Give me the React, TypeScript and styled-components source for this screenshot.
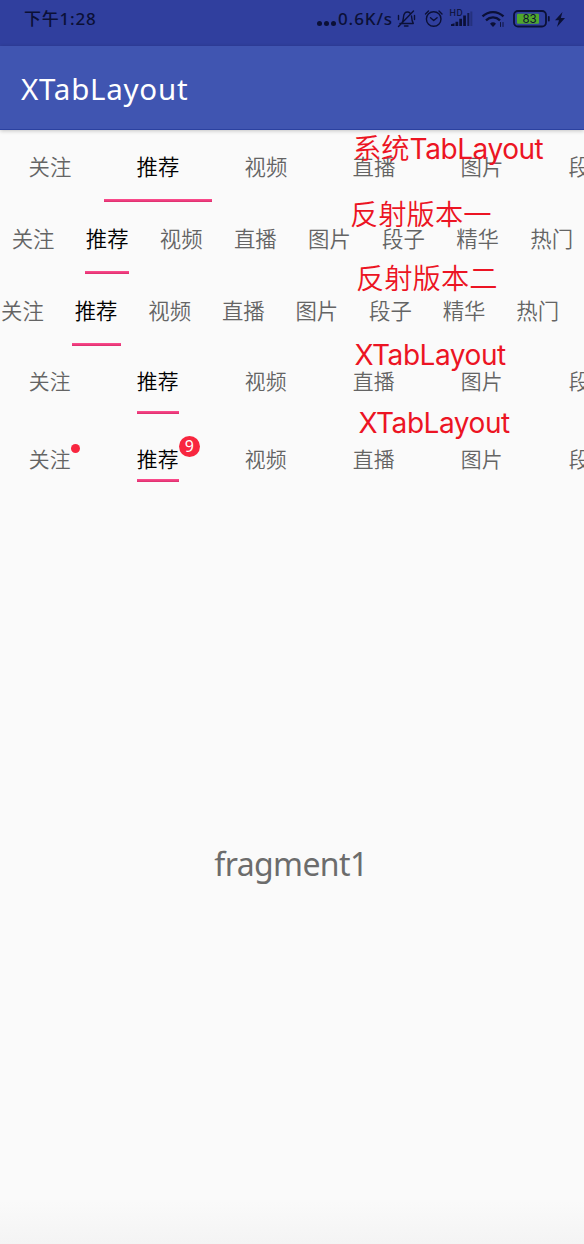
import React from "react";
import styled, { createGlobalStyle } from "styled-components";

const GlobalStyle = createGlobalStyle`
  * { box-sizing: border-box; }
  body { margin: 0; background: #fafafa; }
`;

const UI = `"Noto Sans", "Noto Sans CJK SC", sans-serif`;
const CJK = `"Noto Sans CJK SC", sans-serif`;

const Screen = styled.div`
  position: relative;
  width: 584px;
  height: 1244px;
  overflow: hidden;
  display: flex;
  flex-direction: column;
  background: linear-gradient(#fafafa 96.5%, #f4f4f4);
`;

const StatusBar = styled.header`
  flex: none;
  height: 46px;
  padding: 0 14px 8px 24px;
  display: flex;
  justify-content: space-between;
  align-items: center;
  background: #303f9e;
  color: #0b1036;
`;

const Clock = styled.time`
  font: 500 17px/22px ${UI};
  letter-spacing: 0.8px;
`;

const StatusIcons = styled.div`
  display: flex;
  align-items: center;
  height: 38px;
`;

const Speed = styled.span`
  width: 57px;
  font: 500 17px/22px ${UI};
  letter-spacing: 0.9px;
  white-space: nowrap;
`;

const Toolbar = styled.div`
  flex: none;
  position: relative;
  height: 84px;
  padding: 3px 0 0 21px;
  display: flex;
  align-items: center;
  background: #4055b1;
  border-bottom: 1px solid #2b41a0;
  box-shadow: 0 1px 4px rgba(0, 0, 0, 0.22);
`;

const Title = styled.h1`
  margin: 0;
  font: 400 29.5px/40px ${UI};
  letter-spacing: 0.75px;
  color: #fff;
`;

const TabStrip = styled.nav<{ $height: number; $tab: number; $shift: number; $size: number; $drop?: number }>`
  flex: none;
  display: flex;
  height: ${(p) => p.$height}px;
  margin-left: ${(p) => p.$shift}px;
  padding-top: ${(p) => p.$drop ?? 0}px;
  font: 350 ${(p) => p.$size}px/30px ${CJK};

  & > * {
    flex: 0 0 ${(p) => p.$tab}px;
  }
`;

const Tab = styled.div<{ $active: boolean; $top: number }>`
  display: flex;
  flex-direction: column;
  align-items: center;
  justify-content: space-between;
  padding-top: ${(p) => p.$top}px;
  color: ${(p) => (p.$active ? "#000" : "#646464")};
`;

const Label = styled.span`
  position: relative;
  white-space: nowrap;
`;

const Indicator = styled.i<{ $width: number }>`
  width: ${(p) => p.$width}px;
  height: 3px;
  background: linear-gradient(#ff4f90, #dc2c6c);
`;

const Dot = styled.i`
  position: absolute;
  left: 42px;
  top: 1px;
  width: 9px;
  height: 9px;
  border-radius: 50%;
  background: #f8263f;
`;

const Count = styled.b`
  position: absolute;
  left: 42px;
  top: -7px;
  width: 21px;
  height: 21px;
  border-radius: 50%;
  background: #f8263f;
  color: #fff;
  font: 400 16px/21px ${UI};
  text-align: center;
`;

const Note = styled.div<{ $x: number; $y: number }>`
  position: absolute;
  left: ${(p) => p.$x}px;
  top: ${(p) => p.$y}px;
  font: 350 28.3px/40px ${CJK};
  white-space: nowrap;
  color: #ec1423;
`;

const Latin = styled.span`
  font: 400 28px/40px Inter, sans-serif;
  letter-spacing: -0.45px;
`;

const Page = styled.main`
  flex: 1;
  display: flex;
  justify-content: center;
  align-items: center;
  padding: 3px 2px 0 0;
  font: 400 32px/44px ${UI};
  letter-spacing: -0.6px;
  color: #6c6c6c;
`;

const NAMES = ["关注", "推荐", "视频", "直播", "图片", "段子", "精华", "热门"];

type StripProps = {
  height: number;
  tab: number;
  shift: number;
  size: number;
  line: number;
  top?: number;
  drop?: number;
  badges?: boolean;
};

const Strip = ({ height, tab, shift, size, line, top = 21, drop, badges }: StripProps) => (
  <TabStrip $height={height} $tab={tab} $shift={shift} $size={size} $drop={drop}>
    {NAMES.map((name, i) => (
      <Tab key={name} $active={i === 1} $top={top}>
        <Label>
          {name}
          {badges && i === 0 && <Dot />}
          {badges && i === 1 && <Count>9</Count>}
        </Label>
        {i === 1 && <Indicator $width={line} />}
      </Tab>
    ))}
  </TabStrip>
);

const StatusGlyphs = () => (
  <svg width="175" height="30" viewBox="395 4 175 30" fill="none" stroke="#0b1036" strokeWidth="1.4" strokeLinecap="round" strokeLinejoin="round">
    <path d="M400 23.500h12.500M401.500 23.500c1.800-2 1.800-4 2-6.500.3-3.500 2-5 4-5 1 0 2 .5 2.700 1.200M411.500 16c.2 3 .5 5.500 1.800 7.500M404.500 26h3.500M398.500 26.500 413.500 11M398.500 15.500v4M414.500 15.500v4" />
    <circle cx="433.700" cy="19" r="7.300" />
    <path d="m430.500 17.800 3.200 2.700 3.400-2.700M425.500 14l3-3M442 14l-3-3" />
    <g fill="#0b1036" stroke="none">
      <path d="M451 26v-1.700l3.500-1V26zM455.500 21.800h2.700V26h-2.700zM459.300 18.800h2.700V26h-2.700zM463.200 15.500h2.700V26h-2.700z" />
      <path d="M467.300 13h2v13h-2z" opacity=".8" />
      <path d="M470.300 11.500h2V26h-2z" opacity=".3" />
      <path d="m493 27-3-3.300a4.500 4.500 0 0 1 6 0z" />
      <path d="m562.500 12-7.500 8.200h4l-2 6.800 8-9h-4.200z" />
    </g>
    <text x="449.500" y="16" fill="#0b1036" stroke="none" fontFamily="Inter, sans-serif" fontSize="8.500" fontWeight="500" letterSpacing=".6">HD</text>
    <path d="M482.500 16.400c6-5.800 15-5.800 21 0M486 20.300c4-3.800 10-3.800 14 0" strokeWidth="2.300" strokeLinecap="butt" />
    <path d="M500.500 22.500v4M503 22.500v4" strokeWidth=".9" />
    <rect x="514" y="11" width="32" height="15.500" rx="4" strokeWidth="1.800" />
    <rect x="517" y="13.700" width="22" height="10" rx="1" fill="#4fa72c" stroke="none" />
    <path d="M548.800 17v3.500" strokeWidth="1.800" />
    <text x="522.500" y="23" fill="#0b1036" stroke="none" fontFamily="Inter, sans-serif" fontSize="11.500" fontWeight="400">83</text>
  </svg>
);

const Ellipsis = styled.span`
  display: flex;
  gap: 2px;
  margin: 9px 2px 0 0;
  & > i {
    width: 5px;
    height: 5px;
    border-radius: 50%;
    background: #0b1036;
  }
`;

export default function App() {
  return (
    <Screen>
      <GlobalStyle />
      <StatusBar>
        <Clock>下午1:28</Clock>
        <StatusIcons>
          <Ellipsis><i /><i /><i /></Ellipsis>
          <Speed>0.6K/s</Speed>
          <StatusGlyphs />
        </StatusIcons>
      </StatusBar>
      <Toolbar><Title>XTabLayout</Title></Toolbar>
      <Strip height={72} tab={108} shift={-4} size={21.4} line={108} />
      <Strip height={72} tab={74.1} shift={-4} size={21.4} line={43.5} />
      <Strip height={72} tab={73.6} shift={-14.3} size={21.4} line={49} />
      <Strip height={67.5} tab={108} shift={-4.3} size={20.85} line={41.7} top={19} />
      <Strip height={68} tab={108} shift={-4.3} size={20.85} line={41.7} top={19.5} drop={10} badges />
      <Page>fragment1</Page>
      <Note $x={353} $y={127}>系统<Latin>TabLayout</Latin></Note>
      <Note $x={350} $y={193}>反射版本一</Note>
      <Note $x={356} $y={257}>反射版本二</Note>
      <Note $x={354.5} $y={333}><Latin>XTabLayout</Latin></Note>
      <Note $x={358.5} $y={401}><Latin>XTabLayout</Latin></Note>
    </Screen>
  );
}
